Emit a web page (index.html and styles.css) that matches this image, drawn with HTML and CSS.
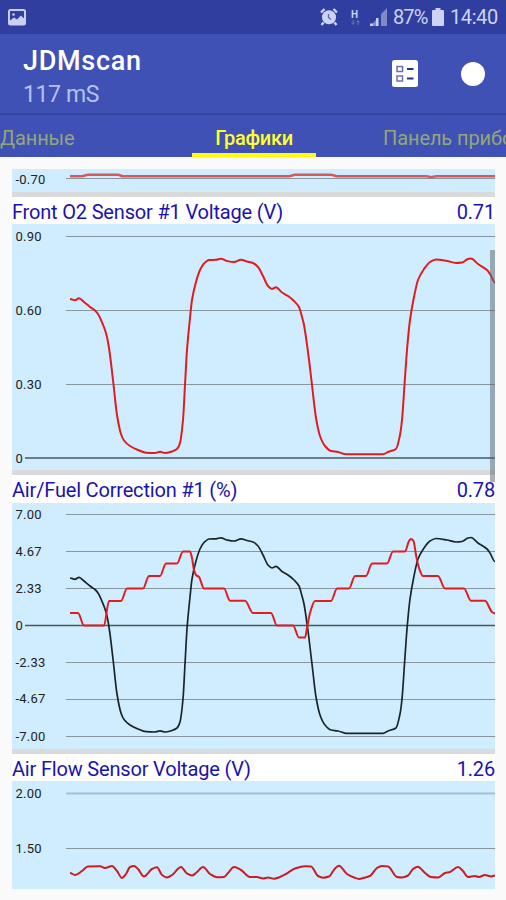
FILE: index.html
```
<!DOCTYPE html>
<html lang="ru">
<head>
    <meta charset="UTF-8">
    <meta name="viewport" content="width=device-width, initial-scale=1.0">
    <title>JDMscan</title>
    <link rel="stylesheet" href="styles.css">
</head>
<body>
    <!-- Status bar -->
    <div class="status-bar">
        <svg class="icon-picture" width="18" height="17" viewBox="0 0 18 17">
            <rect x="1" y="1" width="16" height="14.5" rx="1.5" fill="none" stroke="#c9cff3" stroke-width="2"/>
            <path d="M2 15V11.5L6 8.5L9 10.5L13 6.5L16 9.5V15Z" fill="#c9cff3"/>
            <circle cx="5.5" cy="5.5" r="1.3" fill="#c9cff3"/>
        </svg>
        <div class="status-right">
            <svg class="icon-alarm" width="18" height="18" viewBox="0 0 18 18">
                <circle cx="9" cy="9.2" r="7" fill="#cdd3f4"/>
                <path d="M1 4.5L4.5 1M17 4.5L13.5 1M3.5 14.5L1.5 17M14.5 14.5L16.5 17" stroke="#cdd3f4" stroke-width="2.4"/>
                <path d="M8.5 6V9.5L11 11.5" fill="none" stroke="#5a66b5" stroke-width="1.3"/>
            </svg>
            <div class="network">
                <span>H</span>
                <svg width="9" height="5" viewBox="0 0 9 5">
                    <path d="M2 0V4M0.5 2.5L2 4.5L3.5 2.5M7 5V1M5.5 2.5L7 0.5L8.5 2.5" fill="none" stroke="#6673bd"/>
                </svg>
            </div>
            <svg class="icon-signal" width="18" height="18" viewBox="0 0 18 18">
                <path d="M1 15.5H4V18H1ZM7 10H9.5V18H7Z" fill="#cdd3f4"/>
                <path d="M4 15L7 12V18H4ZM12 6L18 0V18H12Z" fill="#7f8acb"/>
            </svg>
            <span class="battery-level">87%</span>
            <svg class="icon-battery" width="12" height="18" viewBox="0 0 12 18">
                <path d="M3.5 0H8.5V2H11Q12 2 12 3V17Q12 18 11 18H1Q0 18 0 17V3Q0 2 1 2H3.5Z" fill="#cdd3f4"/>
            </svg>
            <span class="clock">14:40</span>
        </div>
    </div>

    <!-- Toolbar -->
    <header class="toolbar">
        <div>
            <h1>JDMscan</h1>
            <p>117 mS</p>
        </div>
        <div class="actions">
            <svg width="26" height="27" viewBox="0 0 26 27">
                <rect width="26" height="27" rx="2.5" fill="#fff"/>
                <path d="M5 6.5H10.500V11.5H5ZM5 16H10.500V21H5Z" fill="none" stroke="#6a72ab" stroke-width="1.5"/>
                <path d="M15 9H21.5M15 18.5H21.5" stroke="#2a3188" stroke-width="2"/>
            </svg>
            <div class="record"></div>
        </div>
    </header>

    <!-- Tabs -->
    <nav class="tabs">
        <span class="tab tab-data">Данные</span>
        <span class="tab tab-charts active">Графики</span>
        <span class="tab tab-panel">Панель приборов</span>
    </nav>

    <main class="charts">
        <svg class="chart" width="483" height="23" viewBox="0 0 483 23">
            <text x="3.5" y="15">-0.70</text>
            <path class="grid" d="M54 9.5H483"/>
            <path class="line thick" id="line0"/>
        </svg>

        <div class="chart-title"><span>Front O2 Sensor #1 Voltage (V)</span><span>0.71</span></div>
        <svg class="chart" width="483" height="246" viewBox="0 0 483 246">
            <text x="3.5" y="17">0.90</text>
            <text x="3.5" y="91">0.60</text>
            <text x="3.5" y="165">0.30</text>
            <text x="3.5" y="239">0</text>
            <path class="grid" d="M54 12.5H483M54 86.5H483M54 160.5H483"/>
            <path class="zero" d="M13 234H483"/>
            <path class="line" id="line1"/>
        </svg>

        <div class="chart-title tall"><span>Air/Fuel Correction #1 (%)</span><span>0.78</span></div>
        <svg class="chart" width="483" height="246" viewBox="0 0 483 246">
            <text x="3.5" y="16">7.00</text>
            <text x="3.5" y="53">4.67</text>
            <text x="3.5" y="90">2.33</text>
            <text x="3.5" y="127">0</text>
            <text x="3.5" y="164">-2.33</text>
            <text x="3.5" y="200">-4.67</text>
            <text x="3.5" y="238">-7.00</text>
            <path class="grid" d="M54 11.5H483M54 48.5H483M54 85.5H483M54 159.5H483M54 196.5H483M54 233.5H483"/>
            <path class="zero" d="M13 122.5H483"/>
            <path class="line black" id="line2"/>
            <path class="line" id="line3"/>
        </svg>

        <div class="chart-title"><span>Air Flow Sensor Voltage (V)</span><span>1.26</span></div>
        <svg class="chart last" width="483" height="108" viewBox="0 0 483 108">
            <text x="3.5" y="17">2.00</text>
            <text x="3.5" y="72">1.50</text>
            <path class="grid light" d="M54 12.500H483"/>
            <path class="grid" d="M54 67.5H483"/>
            <path class="line flow" id="line4"/>
        </svg>

        <div class="scrollbar"></div>
    </main>

    <script>
        // x, y pairs inside each chart
        const previous = [58,7.3, 70,7.3, 76,5.8, 106,5.8, 111,7.3, 277,7.3, 283,5.8, 319,5.8, 325,7.3, 415,7.3, 419,8.2, 424,7.3, 483,7.3];

        const oxygen = [
            58,75, 63,76.3, 67,74.3, 72,78, 78,83, 83,86.5, 86,90, 89,96, 94,109, 97,124, 101,156, 105,191, 109,210, 112,216.5,
            118,222, 126,226, 134,228.7, 143,229, 148,227.8, 153,229, 160,227.5, 165,225, 168,219, 171,196, 173,161, 175,126,
            178,94, 180,76, 184,58, 188,46, 192,39.5, 197,36, 204,35.8, 209,34.8, 215,37, 222,38, 229,35.8, 235,37.5,
            241,39, 246,43, 251,52, 256,62, 260,65, 264,63.3, 270,68.5, 276,72, 282,77, 287,83, 290,93, 292,101,
            296,128, 300,161, 304,194, 308,212, 313,222, 319,227, 326,228, 334,230.3, 371,230.3, 376,228, 384,225, 388,211,
            390,196, 392.5,161, 395,126, 398,96, 402,73, 406,56, 412,45, 418,38, 424,35.5, 435,37, 444,39, 450,38.5,
            456,35, 459,34.5, 466,40, 475,46, 478,50, 483,58.5
        ];

        const correction = [
            58,110, 66,110, 72,122.5, 92,122.5, 97,98, 109,98, 115,85.5, 131,85.5, 137,73, 148,73, 154,60.5, 165,60.5,
            171,48.5, 178,48.5, 180,55, 182,67, 184,72, 187,74, 192,85.5, 212,85.5, 218,97.7, 233,97.7, 241,110, 259,110,
            265,122.5, 281,122.5, 287,134.5, 293,134.5, 295,125, 298,110, 303,98, 319,98, 325,85.5, 337,85.5, 343,73,
            354,73, 360,60.5, 375,60.5, 381,48.5, 393,48.5, 397,38, 399,36, 401.5,38, 404,52, 407,65, 411,73, 426,73,
            433,85.5, 452,85.5, 459,97.7, 473,97.7, 480,109, 483,110.5
        ];

        const airFlow = [
            58,92, 63,94, 70,90, 76,85.5, 88,85.3, 93,87, 100,85, 105,90, 110,97, 114,93, 118,86, 122,85, 126,88, 132,95.5,
            140,88, 145,86.3, 150,94, 155,96.5, 160,94, 169,86, 175,92.5, 180,94.5, 184,92, 191,86, 198,93, 205,96.3,
            212,96, 216,92, 222,86, 229,89, 238,96, 245,96, 251,97.5, 256,96.5, 262,97.7, 268,96, 274,93, 283,87.5,
            293,85.2, 299,85.5, 306,95, 311,96.7, 317,95.5, 323,87.5, 327,84.8, 335,93, 342,96.5, 347,98, 353,96.5,
            358,95, 365,87, 370,85, 376,85.5, 385,96, 390,96.5, 396,94.5, 401,88, 406,85.7, 412,91, 419,96, 426,96.5,
            433,92, 438,91, 446,86, 451,90, 456,96, 463,95, 467,96, 473,94, 479,95.5, 483,94.5
        ];

        // Slope at point i, flat on peaks and plateaus so the curve does not overshoot
        function slope(p, i) {
            if (i === 0 || i === p.length - 1) {
                return 0;
            }
            const before = (p[i][1] - p[i - 1][1]) / (p[i][0] - p[i - 1][0]);
            const after = (p[i + 1][1] - p[i][1]) / (p[i + 1][0] - p[i][0]);
            if (before * after <= 0) {
                return 0;
            }
            return 2 * before * after / (before + after);
        }

        function drawLine(id, data) {
            const p = [];
            for (let i = 0; i < data.length; i += 2) {
                p.push([data[i], data[i + 1]]);
            }
            let d = `M${p[0]}`;
            for (let i = 0; i < p.length - 1; i++) {
                const [x1, y1] = p[i];
                const [x2, y2] = p[i + 1];
                const step = (x2 - x1) / 3;
                d += `C${x1 + step},${y1 + slope(p, i) * step} ${x2 - step},${y2 - slope(p, i + 1) * step} ${x2},${y2}`;
            }
            document.getElementById(id).setAttribute('d', d);
        }

        drawLine('line0', previous);
        drawLine('line1', oxygen);
        drawLine('line2', oxygen);
        drawLine('line3', correction);
        drawLine('line4', airFlow);
    </script>
</body>
</html>
```
FILE: styles.css
```
* {
    box-sizing: border-box;
    margin: 0;
    padding: 0;
}

body {
    font-family: Roboto, "Liberation Sans", sans-serif;
    background-color: #fafafa;
    width: 506px;
    height: 900px;
    overflow: hidden;
}

svg {
    display: block;
}

.status-bar {
    height: 34px;
    padding: 0 9px 0 8px;
    background: #303f9f;
    color: #cdd3f4;
    display: flex;
    justify-content: space-between;
    align-items: center;
}

.status-right {
    display: flex;
    align-items: center;
    font-size: 20px;
    line-height: 36px;
}

.icon-alarm {
    margin-right: 1px;
}

.network {
    width: 9px;
    margin: 0 9px 0 12px;
    font-size: 10px;
    font-weight: bold;
    line-height: 11px;
}

.battery-level {
    width: 34px;
    margin: 0 5px 0 6px;
    letter-spacing: -0.9px;
}

.clock {
    width: 47px;
    margin-left: 6px;
    letter-spacing: -0.4px;
}

.toolbar {
    height: 81px;
    padding: 11px 21px 0 23px;
    background: #3f51b5;
    border-bottom: 2px solid #34449f;
    display: flex;
    justify-content: space-between;
}

.toolbar h1 {
    color: #fff;
    font-size: 27px;
    font-weight: 500;
    letter-spacing: 0.7px;
    line-height: 33px;
}

.toolbar p {
    color: #b9c0ef;
    font-size: 23px;
    letter-spacing: -0.4px;
    line-height: 33px;
}

.actions {
    height: 57px;
    display: flex;
    align-items: center;
    gap: 43px;
}

.record {
    width: 24px;
    height: 24px;
    border-radius: 50%;
    background: #fff;
}

.tabs {
    height: 42px;
    background: #3f51b5;
    color: #95a679;
    font-size: 20px;
    letter-spacing: -0.1px;
    line-height: 46px;
    white-space: nowrap;
    overflow: hidden;
    display: flex;
}

.tab {
    flex: none;
}

.tab-data {
    width: 192px;
}

.tab-charts {
    width: 124px;
    text-align: center;
}

.tab-panel {
    padding-left: 67px;
}

.active {
    height: 42px;
    color: #ffff2e;
    font-weight: 500;
    letter-spacing: -0.3px;
    border-bottom: 4px solid #ffff00;
}

.charts {
    position: relative;
    width: 483px;
    margin: 12px 0 0 12px;
}

.chart {
    box-sizing: content-box;
    background: #cfedff;
    border-bottom: 5px solid #dadada;
}

.last {
    border-bottom: none;
}

.chart text {
    fill: #222;
    font-size: 13px;
    letter-spacing: 0.2px;
}

.chart-title {
    height: 27px;
    background: #fff;
    color: #1a12b0;
    font-size: 20px;
    letter-spacing: -0.18px;
    line-height: 31px;
    display: flex;
    justify-content: space-between;
}

.tall {
    height: 28px;
}

.grid {
    stroke: #8797a0;
    stroke-width: 1;
}

.light {
    stroke: #a9bfca;
    stroke-width: 2;
}

.zero {
    stroke: #4a565c;
    stroke-width: 1.5;
}

.line {
    fill: none;
    stroke: #e01c20;
    stroke-width: 2;
    stroke-linejoin: round;
}

.thick {
    stroke: #d6585e;
    stroke-width: 2.6;
}

.black {
    stroke: #1b2428;
    stroke-width: 1.7;
}

.flow {
    stroke: #cb1c24;
}

.scrollbar {
    position: absolute;
    top: 81px;
    right: 0;
    width: 5px;
    height: 232px;
    background: rgba(90, 100, 110, 0.5);
}
```
